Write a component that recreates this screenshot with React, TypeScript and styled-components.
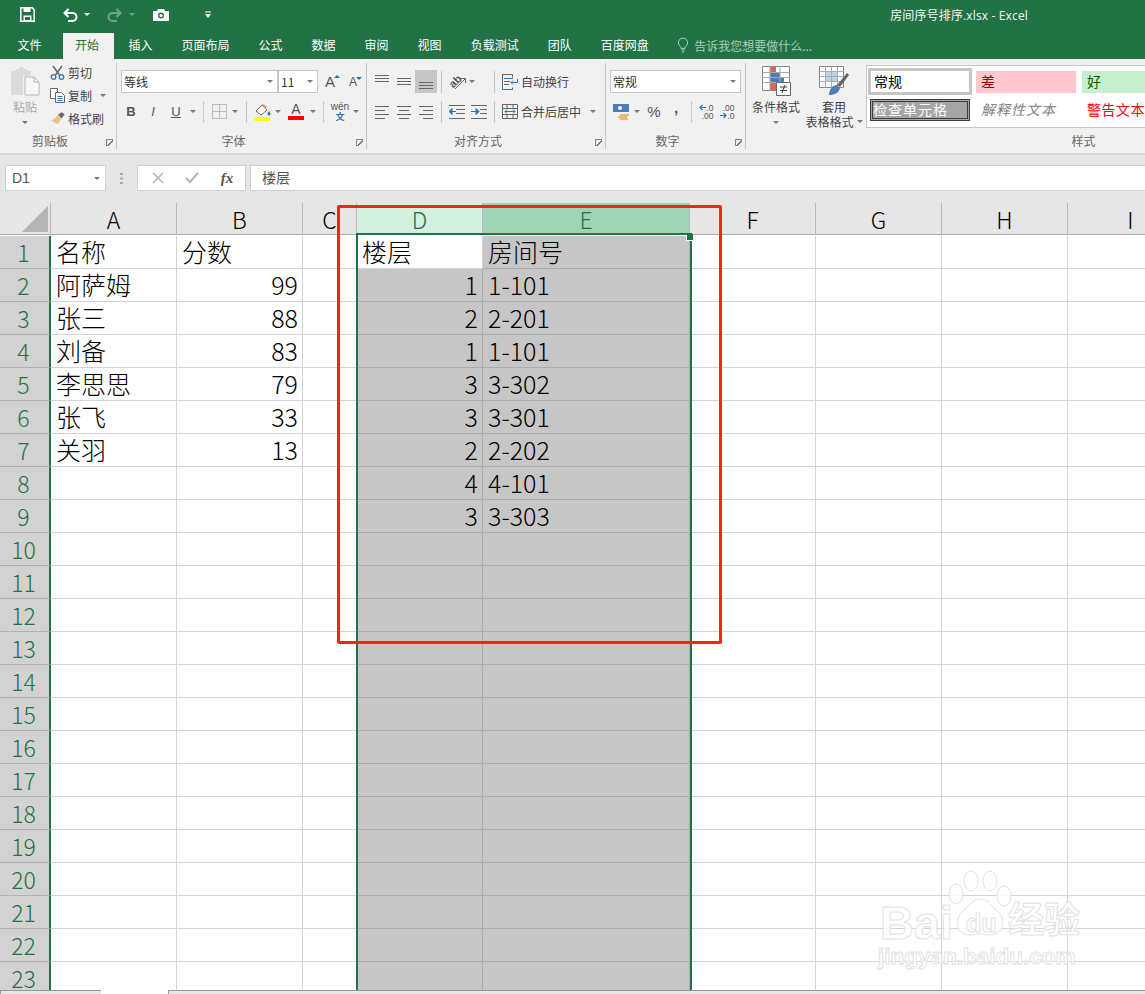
import React from "react";
import styled, { createGlobalStyle } from "styled-components";

const CJK = `"Noto Sans CJK SC", sans-serif`;
const LATIN = `"Open Sans", "Noto Sans CJK SC", sans-serif`;
const GREEN = "#217346";

const Global = createGlobalStyle`
  html, body { margin: 0; padding: 0; height: 994px; overflow: hidden; background: #fff; }
  * { box-sizing: border-box; }
`;

const Page = styled.div`
  position: relative;
  width: 1145px;
  height: 994px;
  overflow: hidden;
  font-family: ${CJK};
  display: flex;
  flex-direction: column;
`;

/* title bar */
const TitleBar = styled.div`
  height: 33px;
  background: ${GREEN};
  display: flex;
  align-items: center;
  color: #fff;
  padding: 0 0 4px 20px;
`;
const QatItem = styled.span<{ $w: number; $dim?: boolean }>`
  width: ${(p) => p.$w}px;
  display: flex;
  align-items: center;
  opacity: ${(p) => (p.$dim ? 0.35 : 1)};
`;
const DocTitle = styled.div`
  margin-left: auto;
  margin-right: 117px;
  font-family: ${LATIN};
  font-size: 12px;
  letter-spacing: 0.15px;
  color: #f4f8f5;
`;
const WhiteArrow = styled.span`
  width: 0;
  height: 0;
  border: 3px solid transparent;
  border-top: 3px solid #fff;
  border-bottom: 0;
`;

/* tabs */
const TabRow = styled.div`
  height: 26px;
  background: ${GREEN};
  display: flex;
  padding-left: 3px;
`;
const Tab = styled.div<{ $active?: boolean }>`
  padding: ${(p) => (p.$active ? "0 15px 0 12px" : "0 14.5px")};
  margin-left: ${(p) => (p.$active ? 7 : 0)}px;
  background: ${(p) => (p.$active ? "#f1f1f1" : "transparent")};
  color: ${(p) => (p.$active ? GREEN : "#fff")};
  font-size: 12px;
  line-height: 24px;
`;
const TellMe = styled.div`
  display: flex;
  align-items: center;
  gap: 5px;
  margin-left: 14px;
  padding-bottom: 2px;
  font-size: 12px;
  color: #a9cdb9;
`;

/* ribbon */
const Ribbon = styled.div`
  height: 96px;
  background: #f1f1f1;
  border-bottom: 2px solid #d6d6d6;
  padding-top: 4px;
  display: flex;
  color: #444;
  font-size: 12px;
`;
const Group = styled.div<{ $w?: number }>`
  ${(p) => (p.$w ? `width: ${p.$w}px;` : "flex: 1;")}
  min-width: 0;
  height: 86px;
  display: flex;
  flex-direction: column;
  border-right: ${(p) => (p.$w ? "1px solid #c6c6c6" : "0")};
`;
const GroupBody = styled.div<{ $pad?: number }>`
  flex: 1;
  min-height: 0;
  padding-left: ${(p) => p.$pad ?? 0}px;
`;
const GroupLabel = styled.div`
  height: 18px;
  display: grid;
  grid-template-columns: 1fr auto 1fr;
  align-items: center;
  color: #666;
  padding: 1px 3px 0 0;
  line-height: 18px;
`;
const GroupTitle = styled.span<{ $shift?: number }>`
  grid-column: 2;
  margin-right: 13px;
  margin-left: ${(p) => p.$shift ?? 0}px;
`;
const Launcher = styled.span`
  grid-column: 3;
  justify-self: end;
  margin-top: 3px;
  width: 7px;
  height: 7px;
  border-left: 1px solid #888;
  border-top: 1px solid #888;
  background: linear-gradient(135deg, transparent 45%, #777 45%, #777 60%, transparent 60%);
`;
const ToolRow = styled.div<{ $top: number }>`
  display: flex;
  align-items: center;
  height: 23px;
  margin-top: ${(p) => p.$top}px;
`;
const Btn = styled.span<{ $w: number; $on?: boolean }>`
  width: ${(p) => p.$w}px;
  height: 23px;
  flex: none;
  display: flex;
  align-items: center;
  justify-content: center;
  background: ${(p) => (p.$on ? "#c6c6c6" : "transparent")};
`;
const Letter = styled.span<{ $b?: boolean; $i?: boolean; $u?: boolean; $size?: number }>`
  font-family: "Liberation Sans", sans-serif;
  font-size: ${(p) => p.$size ?? 13}px;
  font-weight: ${(p) => (p.$b ? 700 : 400)};
  font-style: ${(p) => (p.$i ? "italic" : "normal")};
  text-decoration: ${(p) => (p.$u ? "underline" : "none")};
  color: #555;
  line-height: 1;
`;
const Comma = styled(Letter)`
  margin-bottom: 8px;
`;
const Down = styled.span<{ $ml?: number }>`
  flex: none;
  margin-left: ${(p) => p.$ml ?? 0}px;
  width: 0;
  height: 0;
  border: 3px solid transparent;
  border-top: 3px solid #777;
  border-bottom: 0;
`;
const DownBtn = styled.span<{ $w: number }>`
  width: ${(p) => p.$w}px;
  flex: none;
  display: flex;
  justify-content: center;
`;
const Sep = styled.span<{ $l: number; $r: number }>`
  flex: none;
  width: 1px;
  height: 22px;
  margin: 0 ${(p) => p.$r}px 0 ${(p) => p.$l}px;
  background: #c6c6c6;
`;
const Combo = styled.div<{ $w: number }>`
  width: ${(p) => p.$w}px;
  height: 23px;
  flex: none;
  background: #fff;
  border: 1px solid #c6c6c6;
  display: flex;
  align-items: center;
  justify-content: space-between;
  padding: 0 4px 1px 2px;
  color: #333;
`;
const SmallAction = styled.div`
  display: flex;
  align-items: center;
  height: 23px;
  gap: 3px;
  white-space: nowrap;
`;
const IconSlot = styled.span`
  width: 15px;
  flex: none;
  display: flex;
  justify-content: center;
`;
const ClipGrid = styled.div`
  display: flex;
  padding: 3px 0 0 9px;
`;
const BigButton = styled.div<{ $w: number; $muted?: boolean }>`
  width: ${(p) => p.$w}px;
  flex: none;
  display: flex;
  flex-direction: column;
  align-items: center;
  color: ${(p) => (p.$muted ? "#a9a9a9" : "#444")};
  line-height: 15px;
`;
const BigLabel = styled.span`
  margin-top: 3px;
  display: flex;
  align-items: center;
  white-space: nowrap;
`;
const BigLine = styled.span`
  display: flex;
  align-items: center;
  white-space: nowrap;
  line-height: 15px;
`;
const BigDown = styled(Down)`
  margin-top: 7px;
`;
const SmallStack = styled.div`
  margin: -5px 0 0 9px;
`;
const WrapRow = styled(SmallAction)`
  gap: 3px;
`;
const StylesBody = styled.div`
  flex: 1;
  min-height: 0;
  display: flex;
  padding: 3px 0 0 3px;
`;
const Gallery = styled.div`
  flex: 1;
  min-width: 0;
  height: 63px;
  margin: -1px 0 0 1px;
  background: #fff;
  border: 1px solid #c6c6c6;
  border-right: 0;
  display: grid;
  grid-template-columns: 106px 106px 1fr;
  grid-template-rows: 30px 28px;
  overflow: hidden;
`;
const StyleCell = styled.div<{ $kind: "normal" | "bad" | "good" | "check" | "note" | "warn" }>`
  display: flex;
  align-items: center;
  font-size: 14px;
  white-space: nowrap;
  padding: 0 0 2px 5px;
  ${(p) =>
    p.$kind === "normal"
      ? "margin: 2px 1px 1px; border: 3px solid #c6c6c6; color: #000; padding-left: 3px;"
      : p.$kind === "bad"
        ? "margin: 5px 3px 3px; background: #ffc7ce; color: #9c0006;"
        : p.$kind === "good"
          ? "margin: 5px 0 3px 3px; background: #c6efce; color: #006100;"
          : p.$kind === "check"
            ? "margin: 3px; background: #a5a5a5; border: 3px double #3f3f3f; color: #fff; letter-spacing: 1px; padding-left: 0;"
            : p.$kind === "note"
              ? "margin: 3px; color: #7f7f7f; font-style: italic; letter-spacing: 1px;"
              : "margin: 3px; color: #ff0000; letter-spacing: 0.5px;"}
`;

/* formula bar */
const FormulaRow = styled.div`
  height: 48px;
  background: #e6e6e6;
  display: flex;
  padding: 10px 0 12px 5px;
  font-size: 12px;
  color: #555;
`;
const FieldBox = styled.div<{ $w?: number }>`
  ${(p) => (p.$w ? `width: ${p.$w}px; flex: none;` : "flex: 1;")}
  height: 26px;
  background: #fff;
  border: 1px solid #d0d0d0;
  display: flex;
  align-items: center;
`;
const NameBox = styled(FieldBox)`
  justify-content: space-between;
  padding: 0 5px 0 6px;
  font-family: "Liberation Sans", sans-serif;
  font-size: 14px;
`;
const Dots = styled.div`
  width: 31px;
  flex: none;
  display: flex;
  justify-content: center;
  align-items: center;
`;
const FuncBox = styled(FieldBox)`
  justify-content: space-around;
  padding: 0 1px 0 3px;
  margin-right: 4px;
`;
const Fx = styled.span`
  font-family: "Liberation Serif", serif;
  font-style: italic;
  font-weight: 700;
  font-size: 15px;
  color: #555;
`;
const FormulaText = styled(FieldBox)`
  padding: 0 0 2px 11px;
  font-size: 14px;
  color: #555;
  border-right: 0;
`;

/* sheet */
const SheetArea = styled.div`
  flex: 1;
  min-height: 0;
  overflow: hidden;
  background: #fff;
`;
const Grid = styled.div`
  display: grid;
  grid-template-columns: 51px 126px 126px 54px 126px 207px 126px 126px 126px 126px;
  grid-auto-rows: 33px;
  background: #fff;
`;
const Corner = styled.div`
  height: 32px;
  background: #e6e6e6;
  border-bottom: 1px solid #ababab;
  border-right: 1px solid #b8b8b8;
  display: flex;
  align-items: flex-end;
  justify-content: flex-end;
  padding: 0 2px 2px 0;
`;
const ColHead = styled.div<{ $state: "none" | "selected" | "range" }>`
  height: 32px;
  background: ${(p) => (p.$state === "range" ? "#9fd5b7" : p.$state === "selected" ? "#d3f0e0" : "#e6e6e6")};
  color: ${(p) => (p.$state === "none" ? "#000" : GREEN)};
  border-bottom: 1px solid #ababab;
  border-right: 1px solid #b8b8b8;
  font-size: 23px;
  font-weight: 300;
  line-height: 33px;
  text-align: center;
`;
const RowHead = styled.div`
  background: #d2d2d2;
  color: ${GREEN};
  border-bottom: 1px solid #b0b0b0;
  border-right: 2px solid ${GREEN};
  font-size: 23px;
  font-weight: 300;
  line-height: 33px;
  text-align: center;
  padding-right: 2px;
`;
const Cell = styled.div<{ $sel?: boolean; $num?: boolean }>`
  background: ${(p) => (p.$sel ? "#c6c6c6" : "#fff")};
  border-right: 1px solid ${(p) => (p.$sel ? "#ababab" : "#d4d4d4")};
  border-bottom: 1px solid ${(p) => (p.$sel ? "#ababab" : "#d4d4d4")};
  color: #000;
  font-size: 25px;
  font-weight: 300;
  line-height: 31px;
  height: 33px;
  padding: 0 4px 0 5px;
  text-align: ${(p) => (p.$num ? "right" : "left")};
  white-space: nowrap;
`;
const TabStrip = styled.div`
  height: 4px;
  flex: none;
  display: flex;
  background: #e6e6e6;
`;
const StripPart = styled.div<{ $w?: number; $active?: boolean }>`
  ${(p) => (p.$w ? `width: ${p.$w}px;` : "flex: 1;")}
  background: ${(p) => (p.$active ? "#fff" : "#e6e6e6")};
  border-top: 1px solid ${(p) => (p.$active ? "#fff" : "#999")};
  border-left: 1px solid ${(p) => (p.$active ? "#fff" : "#999")};
`;

/* things that lie over the sheet */
const SelectionFrame = styled.div`
  position: absolute;
  left: 356px;
  top: 233px;
  width: 336px;
  height: 757px;
  border: solid ${GREEN};
  border-width: 2px 2px 0 2px;
  pointer-events: none;
`;
const FillHandle = styled.span`
  position: absolute;
  right: -3px;
  top: -1px;
  width: 6px;
  height: 6px;
  background: ${GREEN};
  box-shadow: -1px 1px 0 #fff;
`;
const RedFrame = styled.div`
  position: absolute;
  left: 337px;
  top: 205px;
  width: 385px;
  height: 439px;
  border: 3px solid #ff2119;
  border-radius: 2px;
  pointer-events: none;
`;
const Watermark = styled.div`
  position: absolute;
  left: 878px;
  top: 870px;
  width: 210px;
  height: 100px;
  pointer-events: none;
`;
const MarkText = styled.span<{ $x: number; $y: number; $size: number }>`
  position: absolute;
  left: ${(p) => p.$x}px;
  top: ${(p) => p.$y}px;
  font-family: "Liberation Sans", ${CJK};
  font-size: ${(p) => p.$size}px;
  font-weight: 700;
  line-height: 1;
  white-space: nowrap;
  color: rgba(255, 255, 255, 0.85);
  -webkit-text-stroke: 1px #e2e2e2;
`;
const MarkPaw = styled.svg`
  position: absolute;
  left: 68px;
  top: 0;
`;

/* icons */
const SaveIcon = () => (
  <svg width="15" height="15" viewBox="0 0 15 15">
    <path d="M.8.8h11.4l2 2v11.4H.8z" fill="none" stroke="#fff" strokeWidth="1.6" />
    <path d="M3.5 1h7v4h-7zM3.5 8.5h8V14h-8z" fill="#fff" />
    <path d="M5 10h5v3H5z" fill={GREEN} />
  </svg>
);
const UndoIcon = () => (
  <svg width="16" height="14" viewBox="0 0 16 14">
    <path d="M2.5 5h8a3.6 3.6 0 0 1 0 8H6" fill="none" stroke="#fff" strokeWidth="2" />
    <path d="M6.5 1 2.500 5l4 4" fill="none" stroke="#fff" strokeWidth="2" />
  </svg>
);
const RedoIcon = () => (
  <svg width="16" height="14" viewBox="0 0 16 14">
    <path d="M13.5 5h-8a3.6 3.6 0 0 0 0 8H10" fill="none" stroke="#fff" strokeWidth="2" />
    <path d="M9.5 1l4 4-4 4" fill="none" stroke="#fff" strokeWidth="2" />
  </svg>
);
const CameraIcon = () => (
  <svg width="16" height="12" viewBox="0 0 16 12">
    <path d="M0 2h4l1-2h6l1 2h4v10H0z" fill="#fff" />
    <circle cx="8" cy="6.500" r="3" fill={GREEN} />
    <circle cx="8" cy="6.500" r="1.600" fill="#fff" />
  </svg>
);
const CustomizeIcon = () => (
  <svg width="8" height="8" viewBox="0 0 8 8">
    <path d="M1 .5h6v1H1zM1 3h6L4 7z" fill="#fff" />
  </svg>
);
const BulbIcon = () => (
  <svg width="12" height="16" viewBox="0 0 12 16">
    <path d="M6 1a4.7 4.7 0 0 0-2.8 8.4c.6.6.8 1.2.8 2h4c0-.8.2-1.400.8-2A4.700 4.700 0 0 0 6 1zM4.200 13h3.600M4.800 15h2.400" fill="none" stroke="#a9cdb9" />
  </svg>
);
const PasteIcon = () => (
  <svg width="30" height="30" viewBox="0 0 30 30">
    <path d="M1 5h5V3h3l1-2h3l1 2h3v2h4v5h-8v19H1z" fill="#dcd8dc" />
    <path d="M15 11h9l5 5v13H15z" fill="#f7f7f7" stroke="#b5b5b5" />
    <path d="M24 11v5h5" fill="none" stroke="#b5b5b5" />
  </svg>
);
const ScissorsIcon = () => (
  <svg width="15" height="15" viewBox="0 0 15 15">
    <path d="M3 1l6.500 9M12 1 5.500 10" stroke="#666" strokeWidth="1.500" fill="none" />
    <circle cx="3.500" cy="12" r="2.300" fill="none" stroke="#2e75b6" strokeWidth="1.300" />
    <circle cx="11.500" cy="12" r="2.300" fill="none" stroke="#2e75b6" strokeWidth="1.300" />
  </svg>
);
const CopyIcon = () => (
  <svg width="15" height="15" viewBox="0 0 15 15">
    <path d="M.5.500h7v10h-7z" fill="#fff" stroke="#666" />
    <path d="M5.500 4.500h6l3 3v7h-9z" fill="#fff" stroke="#666" />
    <path d="M7.500 8.500h5M7.500 10.500h5M7.500 12.500h5" stroke="#2e75b6" />
  </svg>
);
const BrushIcon = () => (
  <svg width="17" height="15" viewBox="0 0 17 15">
    <path d="M9 3 13.500.5l3 2.500-3.500 4.500z" fill="#666" />
    <path d="M9 3l4 4.500L9 14 1 9.500 5 8z" fill="#e8c48c" />
  </svg>
);
const BorderIcon = () => (
  <svg width="15" height="15" viewBox="0 0 15 15">
    <path d="M.5.500h14v14H.5zM7.500.500v14M.5 7.500h14" fill="none" stroke="#888" strokeDasharray="1 1" />
  </svg>
);
const FillIcon = () => (
  <svg width="17" height="18" viewBox="0 0 17 18">
    <path d="M2 8 8 2l5 5-6 5z" fill="#fff" stroke="#666" />
    <path d="M8 1c1 0 4 1 5 3l-2 2z" fill="#e8a060" />
    <path d="M15 8s1.500 2 1.500 3a1.500 1.500 0 0 1-3 0c0-1 1.500-3 1.500-3z" fill="#2e75b6" />
    <path d="M0 14h16v4H0z" fill="#ff0" />
  </svg>
);
const BarLetter = styled.span`
  display: flex;
  flex-direction: column;
  align-items: center;
  width: 16px;
  font-family: "Liberation Sans", sans-serif;
  font-size: 14px;
  line-height: 13px;
  color: #555;
  &::after {
    content: "";
    display: block;
    width: 16px;
    height: 4px;
    background: #f00;
  }
`;
const Phonetic = styled.span`
  display: flex;
  flex-direction: column;
  align-items: center;
  font-family: "Liberation Sans", ${CJK};
  font-size: 10px;
  line-height: 10px;
  color: #555;
  & > b {
    font-weight: 700;
    color: #2e75b6;
    font-size: 9px;
  }
`;
const SizeLetter = styled.span`
  position: relative;
  font-family: "Liberation Sans", sans-serif;
  color: #555;
  line-height: 1;
`;
const SizeArrow = styled.span<{ $down?: boolean }>`
  position: absolute;
  right: -5px;
  top: 1px;
  width: 0;
  height: 0;
  border: 3px solid transparent;
  ${(p) => (p.$down ? "border-top: 3px solid #2e75b6; border-bottom: 0;" : "border-bottom: 3px solid #2e75b6; border-top: 0;")}
`;
const Lines = ({ rows }: { rows: [number, number, number][] }) => (
  <svg width="16" height="16" viewBox="0 0 16 16">
    {rows.map(([x, w, y], i) => (
      <path key={i} d={`M${x} ${y + 0.5}h${w}`} stroke="#666" />
    ))}
  </svg>
);
const OrientWrap = styled.span`
  position: relative;
  width: 17px;
  height: 16px;
`;
const OrientText = styled.span`
  position: absolute;
  left: 0;
  top: 2px;
  font-family: "Liberation Sans", sans-serif;
  font-size: 11px;
  font-weight: 700;
  line-height: 1;
  color: #555;
  transform: rotate(-45deg);
`;
const OrientIcon = () => (
  <OrientWrap>
    <OrientText>ab</OrientText>
    <svg width="17" height="16" viewBox="0 0 17 16">
      <path d="M6 15 16 5M12 4.500h4.500V9" stroke="#666" fill="none" />
    </svg>
  </OrientWrap>
);
const IndentIcon = ({ rev }: { rev?: boolean }) => (
  <svg width="16" height="14" viewBox="0 0 16 14">
    <path d={rev ? "M0 .5h16M9 4.500h7M9 8.500h7M0 13.500h16" : "M0 .5h16M7 4.500h9M7 8.500h9M0 13.500h16"} stroke="#666" />
    <path d={rev ? "M0 6.500h5M5 3.500l3 3-3 3z" : "M7 6.500H2M3 3.500l-3 3 3 3z"} stroke="#2e75b6" fill="#2e75b6" />
  </svg>
);
const WrapIcon = () => (
  <svg width="16" height="16" viewBox="0 0 16 16">
    <path d="M.5.500h10v3M.5.500v15h10v-2" fill="none" stroke="#666" />
    <path d="M2 4.500h9M2 7.500h6M2 10.500h5" stroke="#2e75b6" />
    <path d="M15.500 5v3.500H9M11 6.500l-2 2 2 2" fill="none" stroke="#2e75b6" />
  </svg>
);
const MergeIcon = () => (
  <svg width="16" height="15" viewBox="0 0 16 15">
    <path d="M.5.500h15v14H.5zM.5 4.500h15M.5 10.500h15M5 .5v4M11 .5v4M5 10.500v4M11 10.500v4" fill="none" stroke="#666" />
    <path d="M3 7.500h10M5 5.500l-2 2 2 2M11 5.500l2 2-2 2" fill="none" stroke="#2e75b6" />
  </svg>
);
const MoneyIcon = () => (
  <svg width="17" height="16" viewBox="0 0 17 16">
    <path d="M0 0h16v8H0z" fill="#4a7ebb" />
    <circle cx="7" cy="4" r="2" fill="#fff" />
    <path d="M7 10h9v2H7zM5 12h9v2H5zM7 14h8v2H7z" fill="#e9b872" />
  </svg>
);
const DecimalIcon = ({ rev }: { rev?: boolean }) => (
  <svg width="7" height="7" viewBox="0 0 7 7">
    <path d={rev ? "M0 3.500h6M3.500 1 6 3.500 3.500 6" : "M7 3.500H1M3.500 1 1 3.500 3.500 6"} fill="none" stroke="#2e75b6" strokeWidth="1.200" />
  </svg>
);
const DecimalBox = styled.span`
  display: grid;
  grid-template-columns: 8px auto;
  font-family: "Liberation Sans", sans-serif;
  font-size: 8.500px;
  line-height: 8px;
  color: #555;
  align-items: center;
  justify-items: end;
`;
const DecimalFull = styled.span`
  grid-column: 1 / 3;
`;
const CondIcon = () => (
  <svg width="29" height="30" viewBox="0 0 29 30">
    <path d="M.5.500h27v24H.5z" fill="#fff" stroke="#888" />
    <path d="M8 1h6v5H8zM8 16h6v8H8z" fill="#d9674b" />
    <path d="M8 6h10v5H8zM8 11h14v5H8z" fill="#4a7ebb" />
    <path d="M.5 6.500h27M.5 11.500h27M.5 16.500h27M8 .5v24M18 .5v24" stroke="#aaa" fill="none" />
    <path d="M14.500 16.500h14v13h-14z" fill="#fff" stroke="#666" />
    <path d="M18 21h7M18 24.500h7M23 19l-3 8" stroke="#444" fill="none" />
  </svg>
);
const TableIcon = () => (
  <svg width="30" height="30" viewBox="0 0 30 30">
    <path d="M.5.500h24v21H.5z" fill="#fff" stroke="#888" />
    <path d="M7 6h12v10H7z" fill="#bcd0e8" />
    <path d="M.5 5.500h24M.5 10.500h24M.5 15.500h24M6.500.5v21M12.500.5v21M18.500.5v21" stroke="#aaa" fill="none" />
    <path d="M18 19 28 7l2 2-9 12z" fill="#666" />
    <path d="M10 29c0-6 4-10 8-10l3 3c-1 5-6 7-11 7z" fill="#4a7ebb" />
  </svg>
);
const TriangleCorner = () => (
  <svg width="26" height="26" viewBox="0 0 26 26">
    <path d="M26 0v26H0z" fill="#b4b4b4" />
  </svg>
);
const CrossIcon = () => (
  <svg width="12" height="12" viewBox="0 0 12 12">
    <path d="M1 1l10 10M11 1 1 11" stroke="#b4b4b4" strokeWidth="1.500" />
  </svg>
);
const CheckIcon = () => (
  <svg width="14" height="12" viewBox="0 0 14 12">
    <path d="M1 6l4 4 8-9" fill="none" stroke="#b4b4b4" strokeWidth="2.200" />
  </svg>
);
const DotsIcon = () => (
  <svg width="3" height="11" viewBox="0 0 3 11">
    <path d="M0 0h3v2H0zM0 4.500h3v2H0zM0 9h3v2H0z" fill="#aaa" />
  </svg>
);

/* data */
const tabs = ["页面布局", "公式", "数据", "审阅", "视图", "负载测试", "团队", "百度网盘"];
const colNames = ["A", "B", "C", "D", "E", "F", "G", "H", "I"];
const cols: Record<string, (string | number)[]> = {
  A: ["名称", "阿萨姆", "张三", "刘备", "李思思", "张飞", "关羽"],
  B: ["分数", 99, 88, 83, 79, 33, 13],
  D: ["楼层", 1, 2, 1, 3, 3, 2, 4, 3],
  E: ["房间号", "1-101", "2-201", "1-101", "3-302", "3-301", "2-202", "4-101", "3-303"],
};
const rowNumbers = Array.from({ length: 23 }, (_, i) => i + 1);

const Sheet = () => (
  <SheetArea>
    <Grid>
      <Corner>
        <TriangleCorner />
      </Corner>
      {colNames.map((c) => (
        <ColHead key={c} $state={c === "D" ? "selected" : c === "E" ? "range" : "none"}>
          {c}
        </ColHead>
      ))}
      {rowNumbers.map((r) => (
        <React.Fragment key={r}>
          <RowHead>{r}</RowHead>
          {colNames.map((c) => {
            const value = cols[c]?.[r - 1];
            const selected = (c === "D" || c === "E") && !(c === "D" && r === 1);
            return (
              <Cell key={c} $sel={selected} $num={typeof value === "number"}>
                {value}
              </Cell>
            );
          })}
        </React.Fragment>
      ))}
    </Grid>
  </SheetArea>
);

const App = () => (
  <Page>
    <Global />
    <TitleBar>
      <QatItem $w={42}><SaveIcon /></QatItem>
      <QatItem $w={22}><UndoIcon /></QatItem>
      <QatItem $w={23}><WhiteArrow /></QatItem>
      <QatItem $w={22} $dim><RedoIcon /></QatItem>
      <QatItem $w={24} $dim><WhiteArrow /></QatItem>
      <QatItem $w={51}><CameraIcon /></QatItem>
      <QatItem $w={12}><CustomizeIcon /></QatItem>
      <DocTitle>房间序号排序.xlsx - Excel</DocTitle>
    </TitleBar>
    <TabRow>
      <Tab>文件</Tab>
      <Tab $active>开始</Tab>
      <Tab>插入</Tab>
      {tabs.map((t) => (
        <Tab key={t}>{t}</Tab>
      ))}
      <TellMe>
        <BulbIcon />
        告诉我您想要做什么...
      </TellMe>
    </TabRow>

    <Ribbon>
      <Group $w={117}>
        <GroupBody>
          <ClipGrid>
            <BigButton $w={32} $muted>
              <PasteIcon />
              <BigLabel>粘贴</BigLabel>
              <BigDown />
            </BigButton>
            <SmallStack>
              <SmallAction><IconSlot><ScissorsIcon /></IconSlot>剪切</SmallAction>
              <SmallAction><IconSlot><CopyIcon /></IconSlot>复制<Down $ml={5} /></SmallAction>
              <SmallAction><IconSlot><BrushIcon /></IconSlot>格式刷</SmallAction>
            </SmallStack>
          </ClipGrid>
        </GroupBody>
        <GroupLabel><GroupTitle>剪贴板</GroupTitle><Launcher /></GroupLabel>
      </Group>

      <Group $w={250}>
        <GroupBody $pad={4}>
          <ToolRow $top={7}>
            <Combo $w={157}>等线<Down /></Combo>
            <Combo $w={40}>11<Down /></Combo>
            <Btn $w={24}><SizeLetter style={{ fontSize: 15 }}>A<SizeArrow /></SizeLetter></Btn>
            <Btn $w={22}><SizeLetter style={{ fontSize: 12 }}>A<SizeArrow $down /></SizeLetter></Btn>
          </ToolRow>
          <ToolRow $top={7}>
            <Btn $w={20}><Letter $b>B</Letter></Btn>
            <Btn $w={24}><Letter $i>I</Letter></Btn>
            <Btn $w={22}><Letter $u>U</Letter></Btn>
            <DownBtn $w={11}><Down /></DownBtn>
            <Sep $l={5} $r={5} />
            <Btn $w={20}><BorderIcon /></Btn>
            <DownBtn $w={12}><Down /></DownBtn>
            <Sep $l={5} $r={5} />
            <Btn $w={20}><FillIcon /></Btn>
            <DownBtn $w={12}><Down /></DownBtn>
            <Btn $w={24}><BarLetter>A</BarLetter></Btn>
            <DownBtn $w={9}><Down /></DownBtn>
            <Sep $l={6} $r={5} />
            <Btn $w={22}><Phonetic>wén<b>文</b></Phonetic></Btn>
            <DownBtn $w={9}><Down /></DownBtn>
          </ToolRow>
        </GroupBody>
        <GroupLabel><GroupTitle>字体</GroupTitle><Launcher /></GroupLabel>
      </Group>

      <Group $w={239}>
        <GroupBody $pad={4}>
          <ToolRow $top={7}>
            <Btn $w={22}><Lines rows={[[1, 14, 1], [1, 14, 4], [1, 14, 7]]} /></Btn>
            <Btn $w={22}><Lines rows={[[1, 14, 4], [1, 14, 7], [1, 14, 10]]} /></Btn>
            <Btn $w={22} $on><Lines rows={[[1, 14, 8], [1, 14, 11], [1, 14, 14]]} /></Btn>
            <Sep $l={4} $r={4} />
            <Btn $w={22}><OrientIcon /></Btn>
            <DownBtn $w={8}><Down /></DownBtn>
            <Sep $l={18} $r={7} />
            <WrapRow><WrapIcon />自动换行</WrapRow>
          </ToolRow>
          <ToolRow $top={7}>
            <Btn $w={22}><Lines rows={[[1, 14, 2], [1, 10, 6], [1, 14, 10], [1, 10, 14]]} /></Btn>
            <Btn $w={22}><Lines rows={[[1, 14, 2], [3, 10, 6], [1, 14, 10], [3, 10, 14]]} /></Btn>
            <Btn $w={22}><Lines rows={[[1, 14, 2], [5, 10, 6], [1, 14, 10], [5, 10, 14]]} /></Btn>
            <Sep $l={4} $r={4} />
            <Btn $w={22}><IndentIcon /></Btn>
            <Btn $w={22}><IndentIcon rev /></Btn>
            <Sep $l={4} $r={7} />
            <WrapRow><MergeIcon />合并后居中<Down $ml={6} /></WrapRow>
          </ToolRow>
        </GroupBody>
        <GroupLabel><GroupTitle>对齐方式</GroupTitle><Launcher /></GroupLabel>
      </Group>

      <Group $w={140}>
        <GroupBody $pad={4}>
          <ToolRow $top={7}>
            <Combo $w={131}>常规<Down /></Combo>
          </ToolRow>
          <ToolRow $top={7}>
            <Btn $w={22}><MoneyIcon /></Btn>
            <DownBtn $w={10}><Down /></DownBtn>
            <Btn $w={24}><Letter $size={15}>%</Letter></Btn>
            <Btn $w={20}><Comma $b $size={15}>,</Comma></Btn>
            <Sep $l={5} $r={4} />
            <Btn $w={20}>
              <DecimalBox><DecimalIcon /><span>.0</span><DecimalFull>.00</DecimalFull></DecimalBox>
            </Btn>
            <Btn $w={22}>
              <DecimalBox><DecimalFull>.00</DecimalFull><DecimalIcon rev /><span>.0</span></DecimalBox>
            </Btn>
          </ToolRow>
        </GroupBody>
        <GroupLabel><GroupTitle>数字</GroupTitle><Launcher /></GroupLabel>
      </Group>

      <Group>
        <StylesBody>
          <BigButton $w={54}>
            <CondIcon />
            <BigLabel>条件格式</BigLabel>
            <BigDown />
          </BigButton>
          <BigButton $w={62}>
            <TableIcon />
            <BigLabel>套用</BigLabel>
            <BigLine>表格格式<Down $ml={3} /></BigLine>
          </BigButton>
          <Gallery>
            <StyleCell $kind="normal">常规</StyleCell>
            <StyleCell $kind="bad">差</StyleCell>
            <StyleCell $kind="good">好</StyleCell>
            <StyleCell $kind="check">检查单元格</StyleCell>
            <StyleCell $kind="note">解释性文本</StyleCell>
            <StyleCell $kind="warn">警告文本</StyleCell>
          </Gallery>
        </StylesBody>
        <GroupLabel><GroupTitle $shift={292}>样式</GroupTitle></GroupLabel>
      </Group>
    </Ribbon>

    <FormulaRow>
      <NameBox $w={101}>D1<Down /></NameBox>
      <Dots><DotsIcon /></Dots>
      <FuncBox $w={109}>
        <CrossIcon />
        <CheckIcon />
        <Fx>fx</Fx>
      </FuncBox>
      <FormulaText>楼层</FormulaText>
    </FormulaRow>

    <Sheet />
    <TabStrip>
      <StripPart $w={101} />
      <StripPart $w={67} $active />
      <StripPart />
    </TabStrip>

    <SelectionFrame>
      <FillHandle />
    </SelectionFrame>
    <RedFrame />
    <Watermark>
      <MarkText $x={2} $y={29} $size={47}>Bai</MarkText>
      <MarkPaw width="72" height="68" viewBox="0 0 72 68">
        <g fill="rgba(255,255,255,.85)" stroke="#e2e2e2">
          <ellipse cx="10" cy="24" rx="7" ry="10" />
          <ellipse cx="25" cy="11" rx="7" ry="10" />
          <ellipse cx="44" cy="11" rx="7" ry="10" />
          <ellipse cx="58" cy="26" rx="7" ry="10" />
          <path d="M34 29c8 0 11 6 15 10 5 4 8 8 8 14 0 9-8 12-14 12-4 0-6-1-9-1s-6 1-10 1c-8 0-13-5-13-12 0-6 4-10 8-14 5-4 7-10 15-10z" />
        </g>
      </MarkPaw>
      <MarkText $x={88} $y={41} $size={25}>du</MarkText>
      <MarkText $x={130} $y={33} $size={36}>经验</MarkText>
      <MarkText $x={0} $y={76} $size={22.500}>jingyan.baidu.com</MarkText>
    </Watermark>
  </Page>
);

export default App;
